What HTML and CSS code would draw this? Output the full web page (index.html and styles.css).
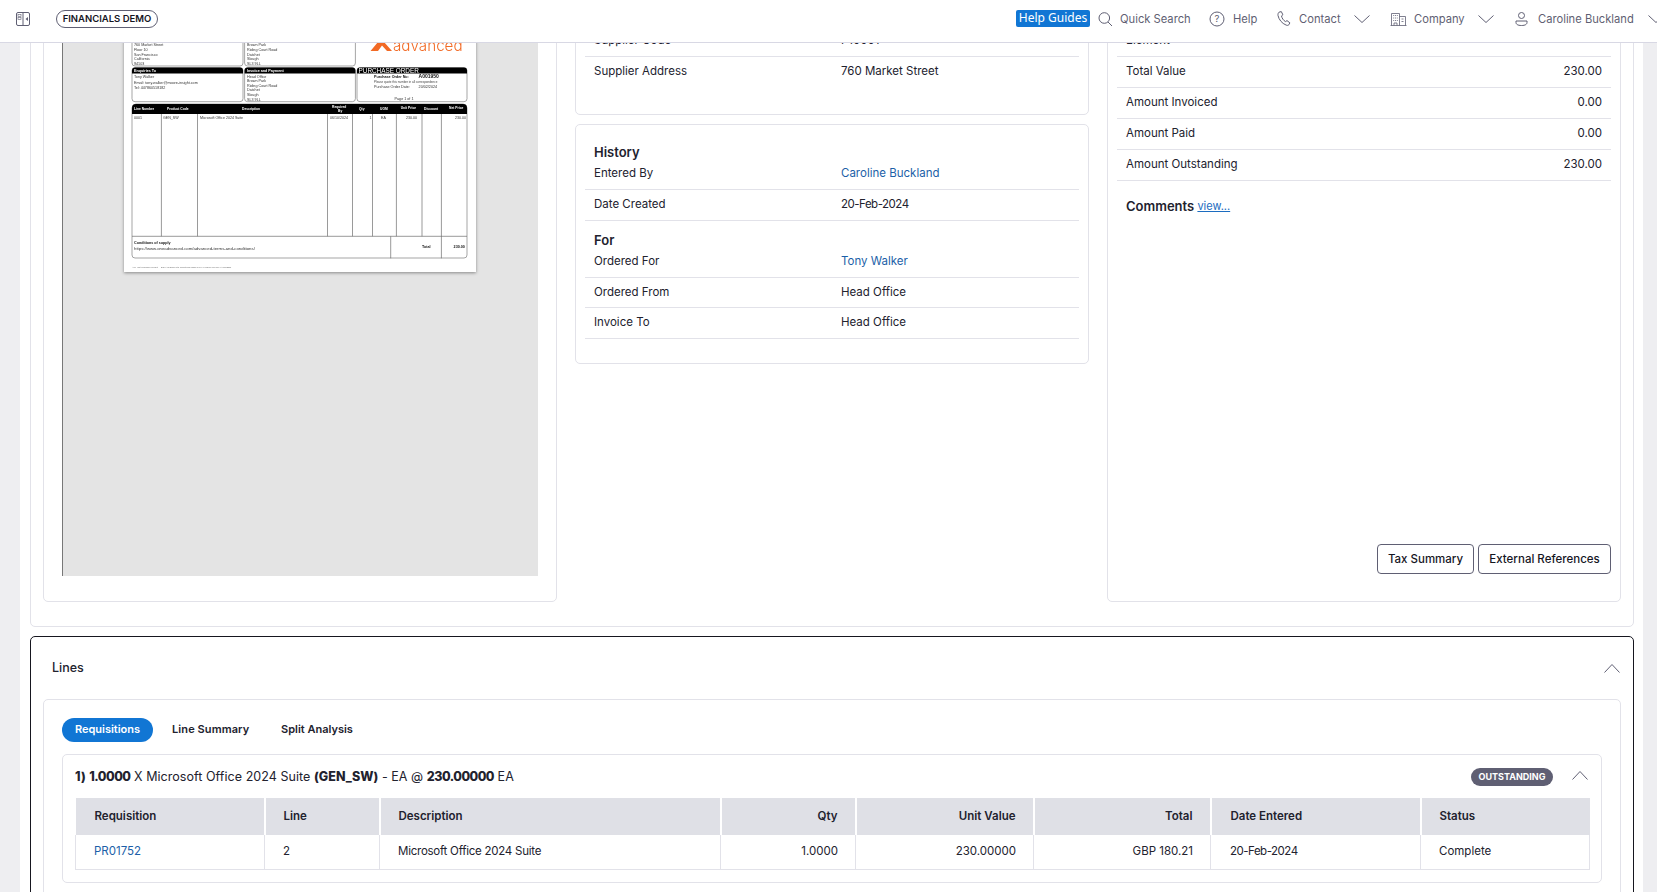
FILE: index.html
```html
<!DOCTYPE html>
<html lang="en">
<head>
<meta charset="utf-8">
<title>Purchase Order</title>
<link rel="stylesheet" href="styles.css">
</head>
<body>
<header class="topbar">
  <svg class="ico-toggle" viewBox="0 0 14 14"><rect x=".5" y=".5" width="13" height="13" rx="1.5"/><line x1="7" y1="1" x2="7" y2="13"/><rect class="thin" x="2" y="2.5" width="3" height="2"/><rect class="thin" x="2" y="5.5" width="3" height="2"/><path class="solid" d="M12 5v4L9.5 7z"/></svg>
  <div class="brand">FINANCIALS DEMO</div>
  <nav class="nav">
    <a class="help-guides">Help Guides</a>
    <svg class="ico ico-search" viewBox="0 0 15 14"><circle cx="6.3" cy="6" r="5.3"/><line x1="10" y1="10" x2="14" y2="14"/></svg>
    <span class="nav-label lbl-search">Quick Search</span>
    <svg class="ico ico-help" viewBox="0 0 16 16"><circle cx="8" cy="8" r="7"/><text class="qmark" x="8" y="11.3">?</text></svg>
    <span class="nav-label lbl-help">Help</span>
    <svg class="ico ico-phone" viewBox="0 0 14 15"><path d="M2 1.2 4.3.6l1.6 3.2-1.4 1.1c.4 2.3 2 4.600 4 5.700l1.500-1 2.900 2.300-1.100 1.900c-.5.700-1.700.8-2.800.2C5 12.500 1.800 8.500 1 4.500.8 3.200 1.200 1.800 2 1.200z"/></svg>
    <span class="nav-label lbl-contact">Contact</span>
    <svg class="chev chev-contact" viewBox="0 0 16 8"><polyline points=".5 .5 8 7.500 15.500 .5"/></svg>
    <svg class="ico ico-company" viewBox="0 0 17 15"><path d="M.5 14.500h16M1.500 14.500V2.500h8v12M9.500 5.500h6v9M3.200 4.500h1M5 4.500h1M6.800 4.500h1M3.200 7h1M5 7h1M6.800 7h1M3.200 9.500h1M5 9.500h1M6.800 9.500h1M4 14.500v-2.500h3v2.500M11.500 8h2M11.500 10.500h2"/></svg>
    <span class="nav-label lbl-company">Company</span>
    <svg class="chev chev-company" viewBox="0 0 16 8"><polyline points=".5 .5 8 7.500 15.500 .5"/></svg>
    <svg class="ico ico-user" viewBox="0 0 13 14"><circle cx="6.500" cy="3.500" r="3"/><path d="M1 9h11v1.500c0 1.600-1.500 3-5.500 3S1 12.100 1 10.500z"/></svg>
    <span class="nav-label lbl-user">Caroline Buckland</span>
    <svg class="chev chev-user" viewBox="0 0 16 8"><polyline points=".5 .5 8 7.500 15.500 .5"/></svg>
  </nav>
</header>

<main class="shell">
  <div class="panel">
    <section class="summary">
      <div class="summary-grid">
        <div class="card doc-card">
          <div class="viewer">
            <svg class="pdf" viewBox="124 -30 352 302">
              <rect class="pdf-page" x="124" y="-30" width="352" height="302"/>
              <!-- address boxes -->
              <path class="pdf-box" d="M132 -20h111v83a3 3 0 0 1-3 3H135a3 3 0 0 1-3-3z"/>
              <path class="pdf-box" d="M244.600 -20h110.800v83a3 3 0 0 1-3 3H247.600a3 3 0 0 1-3-3z"/>
              <g class="pdf-t">
                <text x="134" y="46.400">760 Market Street</text>
                <text x="134" y="51.100">Floor 10</text>
                <text x="134" y="55.700">San Francisco</text>
                <text x="134" y="60.100">California</text>
                <text x="134" y="65.100">94103</text>
                <text x="247" y="46.400">Brown Park</text>
                <text x="247" y="51.100">Riding Court Road</text>
                <text x="247" y="55.700">Datchet</text>
                <text x="247" y="60.100">Slough</text>
                <text x="247" y="65.100">SL3 9LL</text>
              </g>
              <path class="pdf-orange" d="M378 42h6l8 9h-5l-5-5.500-4 5.500h-7.500z"/>
              <text class="pdf-logo" x="393" y="51">advanced</text>
              <!-- second row -->
              <rect class="pdf-box" x="132" y="67.700" width="111" height="34" rx="3"/>
              <rect class="pdf-box" x="244.600" y="67.700" width="110.800" height="34" rx="3"/>
              <rect class="pdf-box" x="357" y="67.700" width="110" height="34" rx="3"/>
              <path class="pdf-black" d="M132 73.500v-3a3 3 0 0 1 3-3h105a3 3 0 0 1 3 3v3z"/>
              <path class="pdf-black" d="M244.600 73.500v-3a3 3 0 0 1 3-3h104.800a3 3 0 0 1 3 3v3z"/>
              <path class="pdf-black" d="M357 73.500v-3a3 3 0 0 1 3-3h104a3 3 0 0 1 3 3v3z"/>
              <text class="pdf-w" x="134" y="72">Enquiries To</text>
              <text class="pdf-w" x="247" y="72">Invoice and Payment</text>
              <text class="pdf-po" x="358.500" y="73">PURCHASE ORDER</text>
              <g class="pdf-t">
                <text x="134" y="78.200">Tony Walker</text>
                <text x="134" y="84.100">Email: tony.walker@moore-insight.com</text>
                <text x="134" y="89.100">Tel: 447860518182</text>
                <text x="247" y="77.700">Head Office</text>
                <text x="247" y="82.100">Brown Park</text>
                <text x="247" y="86.700">Riding Court Road</text>
                <text x="247" y="91.100">Datchet</text>
                <text x="247" y="95.700">Slough</text>
                <text x="247" y="100.700">SL3 9LL</text>
                <text x="394.600" y="99.700">Page 1 of 1</text>
                <text x="374" y="88.100">Purchase Order Date:</text>
                <text x="418.600" y="88.100">20/02/2024</text>
                <text class="pdf-xs" x="374" y="83">Please quote this number in all correspondence</text>
                <text class="pdf-b" x="374" y="77.700">Purchase Order No:</text>
                <text class="pdf-no" x="418.600" y="78">A001950</text>
              </g>
              <!-- lines table -->
              <path class="pdf-box" d="M132 108a4 4 0 0 1 4-4h327a4 4 0 0 1 4 4v147a3 3 0 0 1-3 3H135a3 3 0 0 1-3-3z"/>
              <path class="pdf-black" d="M132 114v-6a4 4 0 0 1 4-4h327a4 4 0 0 1 4 4v6z"/>
              <path class="pdf-rule" d="M161.400 114v122.300M197.500 114v122.300M327.500 114v122.300M352.500 114v122.300M372.500 114v122.300M396.400 114v122.300M422 114v122.300M441.400 114v144.300M132 236.300h335M390.700 236.300v22"/>
              <g class="pdf-wh">
                <text x="134" y="110">Line Number</text>
                <text x="167" y="110">Product Code</text>
                <text x="242" y="110">Description</text>
                <text x="332" y="108">Required</text>
                <text x="338" y="112.300">By</text>
                <text x="359" y="110">Qty</text>
                <text x="380" y="110">UOM</text>
                <text x="400.700" y="108.500">Unit Price</text>
                <text x="424" y="110">Discount</text>
                <text x="449" y="108.500">Net Price</text>
              </g>
              <g class="pdf-t pdf-row">
                <text x="134" y="119.400">0001</text>
                <text x="163" y="119.400">GEN_SW</text>
                <text x="200" y="119.400">Microsoft Office 2024 Suite</text>
                <text x="330" y="119.400">06/10/2024</text>
                <text class="pdf-end" x="371.500" y="119.400">1</text>
                <text x="381" y="119.400">EA</text>
                <text class="pdf-end" x="417" y="119.400">230.00</text>
                <text class="pdf-end" x="466" y="119.400">230.00</text>
              </g>
              <g class="pdf-t">
                <text class="pdf-b" x="134" y="244">Conditions of supply</text>
                <text class="pdf-url" x="134" y="250">https://www.oneadvanced.com/advanced-terms-and-conditions/</text>
                <text class="pdf-b" x="422" y="248">Total</text>
                <text class="pdf-b" x="453.600" y="248">230.00</text>
              </g>
              <text class="pdf-foot" x="132" y="267.500">A01 · Not purchase relevant · · 2024 Advanced Ltd. Registered 05965 in U.K &amp; Wales 01/04/24 VAT 298867</text>
            </svg>
          </div>
        </div>

        <div class="mid-col">
          <div class="card mid-top">
            <div class="row"><span>Supplier Code</span><span>P10001</span></div>
            <div class="row row-last"><span>Supplier Address</span><span>760 Market Street</span></div>
          </div>
          <div class="card mid-bottom">
            <h3 class="sub-head">History</h3>
            <div class="row"><span>Entered By</span><a class="link">Caroline Buckland</a></div>
            <div class="row"><span>Date Created</span><span class="date">20-Feb-2024</span></div>
            <h3 class="sub-head sub-head-for">For</h3>
            <div class="row"><span>Ordered For</span><a class="link">Tony Walker</a></div>
            <div class="row row-tight"><span>Ordered From</span><span>Head Office</span></div>
            <div class="row"><span>Invoice To</span><span>Head Office</span></div>
          </div>
        </div>

        <div class="card totals">
          <div class="row-v"><span>Element</span><span></span></div>
          <div class="row-v"><span>Total Value</span><span>230.00</span></div>
          <div class="row-v"><span>Amount Invoiced</span><span>0.00</span></div>
          <div class="row-v"><span>Amount Paid</span><span>0.00</span></div>
          <div class="row-v"><span>Amount Outstanding</span><span>230.00</span></div>
          <div class="comments"><span class="comments-label">Comments</span> <a class="view-link">view...</a></div>
          <div class="actions">
            <button class="btn btn-tax">Tax Summary</button>
            <button class="btn btn-ext">External References</button>
          </div>
        </div>
      </div>
    </section>

    <section class="lines">
      <div class="lines-head">
        <span class="lines-title">Lines</span>
        <svg class="chev-up" viewBox="0 0 16 9"><polyline points=".5 8.500 8 .5 15.500 8.500"/></svg>
      </div>
      <div class="card lines-body">
        <div class="tabs">
          <a class="tab tab-active">Requisitions</a>
          <a class="tab tab-line">Line Summary</a>
          <a class="tab tab-split">Split Analysis</a>
        </div>
        <div class="req-card">
          <div class="req-head">
            <div class="req-title"><b>1)</b> <b class="req-num">1.0000</b> X Microsoft Office 2024 Suite <b>(GEN_SW)</b> - EA @ <b class="req-num">230.00000</b> EA</div>
            <span class="badge">OUTSTANDING</span>
            <svg class="chev-up chev-req" viewBox="0 0 16 9"><polyline points=".5 8.500 8 .5 15.500 8.500"/></svg>
          </div>
          <table class="req-table">
            <colgroup>
              <col class="c1"><col class="c2"><col class="c3"><col class="c4"><col class="c5"><col class="c6"><col class="c7"><col class="c8">
            </colgroup>
            <thead>
              <tr><th class="first">Requisition</th><th>Line</th><th>Description</th><th class="num">Qty</th><th class="num">Unit Value</th><th class="num">Total</th><th class="nudge">Date Entered</th><th>Status</th></tr>
            </thead>
            <tbody>
              <tr><td><a class="link">PR01752</a></td><td>2</td><td class="desc">Microsoft Office 2024 Suite</td><td class="num">1.0000</td><td class="num">230.00000</td><td class="num">GBP 180.21</td><td class="date">20-Feb-2024</td><td>Complete</td></tr>
            </tbody>
          </table>
        </div>
      </div>
    </section>
  </div>
</main>
</body>
</html>
```
FILE: styles.css
```css
* { box-sizing: border-box; }
html, body { margin: 0; padding: 0; height: 892px; overflow: hidden; }
body {
  font-family: Inter, "Open Sans", "Liberation Sans", sans-serif;
  font-size: 11.500px;
  color: #22222e;
  background: #eeeef1;
}
a { text-decoration: none; }
h3 { margin: 0; }
.date { letter-spacing: -.5px; }

/* top bar */
.topbar {
  height: 43px;
  background: #fff;
  border-bottom: 1px solid #d8d8e4;
  display: flex;
  align-items: center;
  padding: 0 0 5px 16px;
  overflow: hidden;
  position: relative;
  z-index: 2;
}
.ico-toggle { width: 14px; height: 14px; flex: none; fill: none; stroke: #5f5f73; stroke-width: 1; }
.ico-toggle .thin { stroke-width: .6; }
.ico-toggle .solid { fill: #5f5f73; stroke: none; }
.brand {
  margin-left: 26px;
  width: 102px;
  height: 18px;
  flex: none;
  border: 1px solid #5f5f73;
  border-radius: 9px;
  font-size: 9.500px;
  font-weight: 600;
  line-height: 16px;
  text-align: center;
  color: #16161f;
  white-space: nowrap;
}
.nav { margin-left: 858px; display: flex; align-items: center; flex: none; white-space: nowrap; }
.help-guides {
  width: 74px;
  height: 17px;
  flex: none;
  background: #1176d4;
  border-radius: 2px;
  color: #fff;
  font-family: "Noto Sans", sans-serif;
  font-size: 12px;
  line-height: 16px;
  text-align: center;
}
.ico { flex: none; fill: none; stroke: #5f5f73; stroke-width: 1; }
.ico-search { width: 15px; height: 14px; margin-left: 8px; }
.ico-help { width: 16px; height: 16px; margin-left: 19px; }
.qmark { fill: #5f5f73; stroke: none; font-size: 9.500px; text-anchor: middle; font-family: Inter, sans-serif; }
.ico-phone { width: 14px; height: 15px; margin-left: 19px; }
.ico-company { width: 17px; height: 15px; margin-left: 20px; stroke-width: .8; }
.ico-user { width: 13px; height: 14px; margin-left: 21px; }
.nav-label { flex: none; color: #5f5f73; font-size: 11.200px; margin-left: 8px; }
.lbl-search { width: 70px; margin-left: 7px; }
.lbl-help { width: 25px; }
.lbl-contact { width: 41px; }
.lbl-company { width: 50px; margin-left: 7px; }
.lbl-user { width: 96px; margin-left: 10px; }
.chev { width: 16px; height: 8px; flex: none; margin-left: 14px; fill: none; stroke: #5f5f73; stroke-width: 1; }

/* page */
.shell { height: 849px; overflow: hidden; padding: 0 14px 0 20px; }
.panel { display: flow-root; background: #fff; height: 849px; padding: 0 9px 0 10px; }
.card { background: #fff; border: 1px solid #e2e2e9; border-radius: 5px; }
.summary {
  margin-top: -100px;
  border: 1px solid #e2e2e9;
  border-radius: 5px;
  padding: 0 12px 24px;
}
.summary-grid { display: grid; grid-template-columns: 514px 514px 514px; column-gap: 18px; }

/* document */
.doc-card { padding: 18px 18px 25px; }
.viewer {
  height: 613px;
  background: #e4e4e4;
  border-left: 1px solid #777;
  display: flex;
  justify-content: center;
  padding-top: 7px;
  padding-right: 1px;
  overflow: hidden;
}
.pdf { width: 352px; height: 302px; flex: none; filter: blur(.35px); box-shadow: 0 1px 3px rgba(0,0,0,.4); font-family: "Liberation Sans", sans-serif; }
.pdf-page { fill: #fff; }
.pdf-box { fill: #fff; stroke: #808080; stroke-width: .7; }
.pdf-black { fill: #000; }
.pdf-rule { fill: none; stroke: #6e6e6e; stroke-width: .7; }
.pdf-t text { font-size: 3.700px; fill: #333; }
.pdf-t .pdf-xs { font-size: 3px; fill: #444; }
.pdf-t .pdf-b { font-weight: 700; fill: #111; }
.pdf-t .pdf-no { font-size: 5px; font-weight: 700; fill: #111; }
.pdf-t .pdf-url { font-size: 4.300px; }
.pdf-row text { font-size: 3.600px; }
.pdf-t .pdf-end { text-anchor: end; }
.pdf-w { font-size: 3.700px; fill: #fff; font-weight: 700; }
.pdf-wh text { font-size: 3.300px; fill: #fff; font-weight: 700; }
.pdf-po { font-size: 6.400px; fill: #fff; }
.pdf-foot { font-size: 2.100px; fill: #666; }
.pdf-orange { fill: #f26a25; }
.pdf-logo { font-family: Inter, sans-serif; font-size: 15.200px; font-weight: 300; fill: #f26a25; }

/* middle */
.mid-col { display: flex; flex-direction: column; gap: 9px; align-self: start; }
.mid-top { padding: 81px 9px 26px; }
.mid-bottom { padding: 9px 9px 24px; }
.row {
  display: grid;
  grid-template-columns: 247px 1fr;
  height: 31px;
  padding: 0 0 2px 9px;
  align-items: center;
  border-bottom: 1px solid #e2e2e9;
}
.row-last { border-bottom: 0; padding-bottom: 3px; }
.row-tight { height: 30px; }
.sub-head { height: 25px; padding: 11px 0 0 9px; font-size: 13px; line-height: 14px; font-weight: 600; color: #22222e; }
.sub-head-for { height: 26px; padding-top: 12px; }
.link { color: #1c5fa8; }

/* totals */
.totals { padding: 81px 9px 27px; display: flex; flex-direction: column; }
.row-v {
  display: flex;
  justify-content: space-between;
  align-items: center;
  height: 31px;
  padding: 0 9px 2px;
  border-bottom: 1px solid #e2e2e9;
}
.comments { padding: 16px 0 0 9px; line-height: 18px; }
.comments-label { font-size: 13px; font-weight: 600; }
.view-link { color: #1c6cc0; text-decoration: underline; font-size: 11px; position: relative; top: -1px; }
.actions { margin-top: auto; display: flex; justify-content: flex-end; gap: 4px; }
.btn {
  height: 30px;
  background: #fff;
  border: 1px solid #5f5f73;
  border-radius: 4px;
  font: 500 11.500px Inter, sans-serif;
  color: #16161f;
  padding: 0;
}
.btn-tax { width: 97px; }
.btn-ext { width: 133px; }

/* lines */
.lines {
  margin-top: 9px;
  border: 1px solid #16161f;
  border-radius: 5px;
  padding: 0 12px 30px;
}
.lines-head { height: 62px; display: flex; align-items: center; justify-content: space-between; padding: 0 1px 0 9px; }
.lines-title { font-size: 12.500px; font-weight: 500; padding-bottom: 2px; }
.chev-up { width: 16px; height: 9px; flex: none; fill: none; stroke: #5f5f73; stroke-width: 1; }
.lines-body { padding: 18px 18px 18px; }
.tabs { display: flex; align-items: center; height: 24px; }
.tab { font-size: 11px; font-weight: 600; color: #22222e; padding-bottom: 2px; }
.tab-active { width: 91px; height: 24px; border-radius: 12px; background: #1176d4; color: #fff; line-height: 22px; text-align: center; }
.tab-line { margin-left: 19px; width: 109px; letter-spacing: .1px; }
.tab-split { width: 80px; }
.req-card { margin-top: 12px; border: 1px solid #e2e2e9; border-radius: 5px; padding: 0 12px 12px; }
.req-head { height: 43px; display: flex; align-items: center; }
.req-title { font-size: 12.500px; flex: 1; padding-bottom: 1px; letter-spacing: .05px; }
.req-title b { font-weight: 800; }
.req-title .req-num { letter-spacing: -.5px; }
.badge {
  width: 82px;
  height: 18px;
  border-radius: 9px;
  background: #5f5f73;
  color: #fff;
  font-size: 9px;
  font-weight: 700;
  line-height: 18px;
  text-align: center;
}
.chev-req { margin: 0 1px 0 19px; position: relative; top: -1px; }
.req-table { width: 1514px; table-layout: fixed; border-collapse: collapse; }
.c1 { width: 189px; } .c2 { width: 115px; } .c3 { width: 341px; } .c4 { width: 135px; }
.c5 { width: 178px; } .c6 { width: 177px; } .c7 { width: 210px; } .c8 { width: 169px; }
.req-table th {
  height: 37px;
  background: #dfe0e6;
  border-right: 2px solid #fff;
  padding: 0 18px 2px;
  font-size: 11.500px;
  font-weight: 600;
  text-align: left;
  color: #22222e;
}
.req-table th:last-child { border-right: 0; }
.req-table td {
  height: 34px;
  border: 1px solid #e2e2e9;
  border-top: 0;
  padding: 0 18px 2px;
}
.req-table .first, .req-table .nudge, .req-table td.date { padding-left: 19px; }
.req-table .desc { letter-spacing: -.25px; }
.req-table .num { text-align: right; padding-right: 17px; }
```
